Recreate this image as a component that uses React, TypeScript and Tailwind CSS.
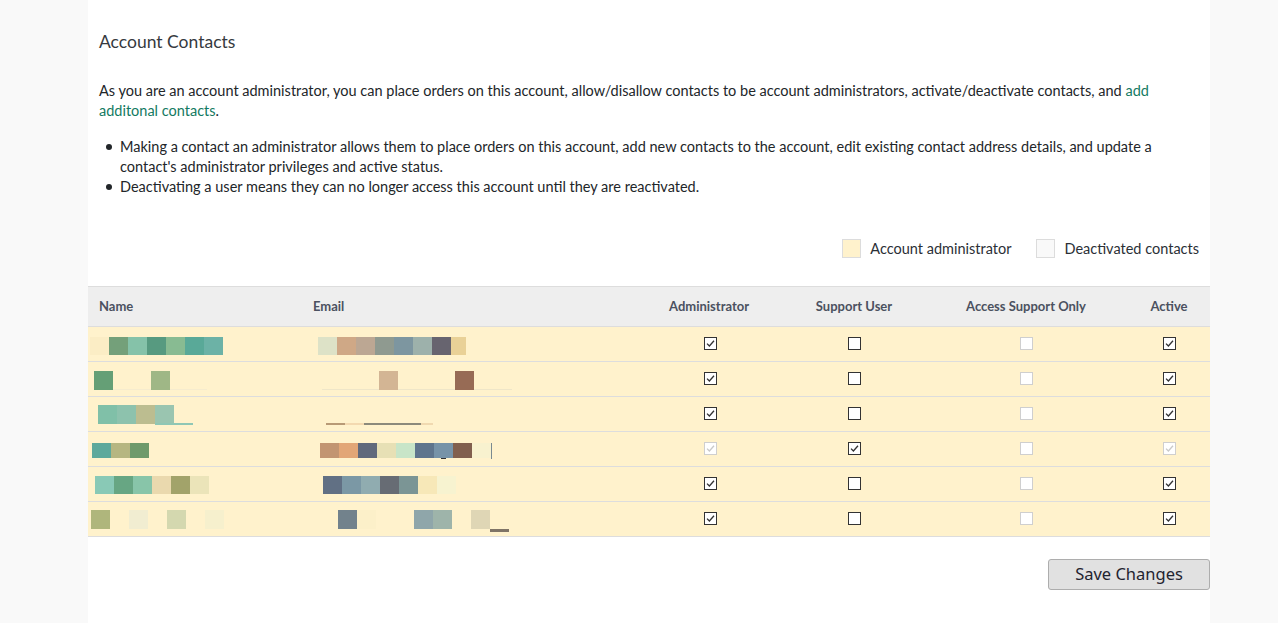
import React from 'react'

type Rect = [number, number, number, number, string]
type Box = 'on' | 'off' | 'dis' | 'disOn'

interface Row {
  name: Rect[]
  email: Rect[]
  admin: Box
  support: Box
  access: Box
  active: Box
}

// consecutive 19px blocks of a pixelated value
function strip(x: number, y: number, h: number, colors: string[], w = 19): Rect[] {
  return colors.map((c, i) => [x + i * w, y, w, h, c] as Rect)
}

const rows: Row[] = [
  {
    name: strip(2, 10, 18, ['#fbedc5', '#74a07a', '#85c2a9', '#579a80', '#88bb92', '#59a998', '#6cb2a6']),
    email: [
      ...strip(16, 10, 18, ['#dde2c7', '#cfa886', '#bca793', '#8f9a90', '#7d96a0', '#9db1ab', '#67646f']),
      [149, 10, 15, 18, '#e9d197'],
    ],
    admin: 'on', support: 'off', access: 'dis', active: 'on',
  },
  {
    name: [
      [25, 27, 94, 1, '#f6ecce'],
      [6, 9, 19, 19, '#659f76'],
      [63, 9, 19, 19, '#9fb786'],
    ],
    email: [
      [20, 27, 190, 1, '#efe6c8'],
      [77, 9, 19, 19, '#d3b594'],
      [153, 9, 19, 19, '#976b55'],
    ],
    admin: 'on', support: 'off', access: 'dis', active: 'on',
  },
  {
    name: [
      ...strip(10, 8, 19, ['#80c0a8', '#8dc2ad', '#bcbd90', '#9ac5b0']),
      [67, 26, 38, 2, '#8fc7b5'],
    ],
    email: [
      [24, 26, 19, 2, '#b89a76'],
      [43, 26, 19, 2, '#f3d9b0'],
      [62, 26, 57, 2, '#8c8a7b'],
      [119, 26, 12, 2, '#f0d9b0'],
    ],
    admin: 'on', support: 'off', access: 'dis', active: 'on',
  },
  {
    name: strip(4, 11, 15, ['#5ea99c', '#b6b681', '#6e9a6b']),
    email: [
      ...strip(18, 11, 15, ['#c29572', '#e2a677', '#60697c', '#e7e0b5', '#c8e5c8', '#5f758d', '#7793a8', '#815f4e', '#f8f2cf']),
      [189, 11, 1, 16, '#7a8a90'],
      [139, 26, 5, 1, '#333333'],
    ],
    admin: 'disOn', support: 'on', access: 'dis', active: 'disOn',
  },
  {
    name: strip(7, 9, 18, ['#89c9b6', '#67a683', '#88c5a9', '#ead9ae', '#a2a36a', '#ebe4b9']),
    email: strip(21, 9, 18, ['#617084', '#7b98a5', '#90acb0', '#676c74', '#7b9595', '#f7e8b8', '#f7f3d0']),
    admin: 'on', support: 'off', access: 'dis', active: 'on',
  },
  {
    name: [
      [3, 8, 19, 19, '#afb67c'],
      [41, 8, 19, 19, '#f1edd1'],
      [79, 8, 19, 19, '#d4d8af'],
      [117, 8, 19, 19, '#f6f0cd'],
    ],
    email: [
      [36, 8, 19, 19, '#72828c'],
      [55, 8, 19, 19, '#fcf0c9'],
      [112, 8, 19, 19, '#8fa6aa'],
      [131, 8, 19, 19, '#9eb4aa'],
      [169, 8, 19, 19, '#dfd6b5'],
      [188, 27, 19, 3, '#7f7466'],
    ],
    admin: 'on', support: 'off', access: 'dis', active: 'on',
  },
]

function Mosaic({ rects, width }: { rects: Rect[]; width: number }) {
  return (
    <svg width={width} height={34} className="block">
      {rects.map(([x, y, w, h, c], i) => (
        <rect key={i} x={x} y={y} width={w} height={h} fill={c} />
      ))}
    </svg>
  )
}

function Check({ state }: { state: Box }) {
  const disabled = state === 'dis' || state === 'disOn'
  const checked = state === 'on' || state === 'disOn'
  return (
    <div
      className={`w-[13px] h-[13px] bg-white border ${disabled ? 'border-[#cfcfcf]' : 'border-[#333333]'}`}
    >
      {checked && (
        <svg width="11" height="11" viewBox="0 0 11 11" className="block">
          <path
            d="M2 5.6 L4.4 8 L9 2.8"
            fill="none"
            stroke={disabled ? '#c9c9c9' : '#333333'}
            strokeWidth="1.3"
          />
        </svg>
      )}
    </div>
  )
}

const cols = 'grid grid-cols-[214px_332px_150px_140px_204px_82px]'

export default function App() {
  return (
    <div className="min-h-screen bg-[#f9f9f9] font-['Lato',sans-serif] text-[#222629]">
      <div className="ml-[88px] w-[1122px] bg-white pt-[30px] pb-[34px] min-h-[623px]">
        <div className="px-[11px]">
          <h2 className="text-[17.5px] leading-[24px] text-[#363a40]">Account Contacts</h2>

          <p className="mt-[27px] text-[14.5px] leading-[20px] pr-[10px]">
            As you are an account administrator, you can place orders on this account, allow/disallow contacts to be
            account administrators, activate/deactivate contacts, and{' '}
            <a className="text-[#137a62]">add additonal contacts</a>.
          </p>

          <ul className="mt-[16px] text-[14.5px] leading-[20px] pr-[10px]">
            <li className="flex">
              <span className="w-[21px] shrink-0 flex justify-center pt-[7px] pr-[1px]">
                <span className="w-[6px] h-[6px] rounded-full bg-[#222629]" />
              </span>
              <span>
                Making a contact an administrator allows them to place orders on this account, add new contacts to the
                account, edit existing contact address details, and update a contact's administrator privileges and
                active status.
              </span>
            </li>
            <li className="flex">
              <span className="w-[21px] shrink-0 flex justify-center pt-[7px] pr-[1px]">
                <span className="w-[6px] h-[6px] rounded-full bg-[#222629]" />
              </span>
              <span>Deactivating a user means they can no longer access this account until they are reactivated.</span>
            </li>
          </ul>

          <div className="mt-[41px] flex justify-end items-center gap-[25px] text-[14.5px] text-[#2b2f36]">
            <div className="flex items-center gap-[9px]">
              <span className="w-[19px] h-[19px] bg-[#fff2cc] border border-[#dcdcdc]" />
              <span>Account administrator</span>
            </div>
            <div className="flex items-center gap-[9px]">
              <span className="w-[19px] h-[19px] bg-[#f9f9f9] border border-[#dcdcdc]" />
              <span>Deactivated contacts</span>
            </div>
          </div>
        </div>

        <div className="mt-[26px] border-t border-[#dddddd]">
          <div
            className={`${cols} h-[40px] items-center bg-[#eeeeee] border-b border-[#dddddd] text-[13px] font-bold text-[#4b5160]`}
          >
            <div className="pl-[11px]">Name</div>
            <div className="pl-[11px]">Email</div>
            <div className="text-center">Administrator</div>
            <div className="text-center">Support User</div>
            <div className="text-center">Access Support Only</div>
            <div className="text-center">Active</div>
          </div>
          {rows.map((r, i) => (
            <div key={i} className={`${cols} h-[35px] items-center bg-[#fff2cc] border-b border-[#dddddd]`}>
              <Mosaic rects={r.name} width={214} />
              <Mosaic rects={r.email} width={332} />
              <div className="flex justify-center pl-[2px]">
                <Check state={r.admin} />
              </div>
              <div className="flex justify-center">
                <Check state={r.support} />
              </div>
              <div className="flex justify-center">
                <Check state={r.access} />
              </div>
              <div className="flex justify-center">
                <Check state={r.active} />
              </div>
            </div>
          ))}
        </div>

        <div className="mt-[22px] flex justify-end">
          <button className="w-[162px] h-[31px] bg-[#e1e1e1] border border-[#adadad] rounded-[3px] text-[16.5px] text-[#1f2430] font-['Noto_Sans',sans-serif]">
            Save Changes
          </button>
        </div>
      </div>
    </div>
  )
}
